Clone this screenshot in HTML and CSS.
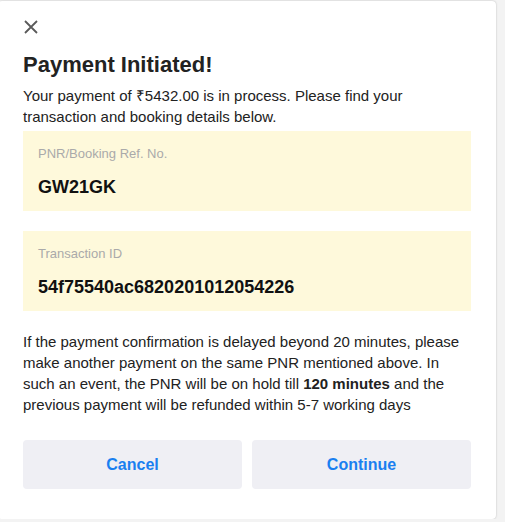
FILE: index.html
```html
<!DOCTYPE html>
<html>
<head>
<meta charset="utf-8">
<link rel="stylesheet" href="styles.css">
</head>
<body>
<div class="card">
  <button class="close" aria-label="Close">
    <svg width="16" height="16" viewBox="0 0 16 16"><path d="M2 2 L14 14 M14 2 L2 14" stroke="#5a5a5a" stroke-width="1.8" fill="none"/></svg>
  </button>
  <h1 class="title">Payment Initiated!</h1>
  <p class="intro">Your payment of ₹5432.00 is in process. Please find your transaction and booking details below.</p>
  <div class="info">
    <div class="label">PNR/Booking Ref. No.</div>
    <div class="value">GW21GK</div>
  </div>
  <div class="info">
    <div class="label">Transaction ID</div>
    <div class="value">54f75540ac6820201012054226</div>
  </div>
  <p class="note">If the payment confirmation is delayed beyond 20 minutes, please make another payment on the same PNR mentioned above. In such an event, the PNR will be on hold till <b>120 minutes</b> and the previous payment will be refunded within 5-7 working days</p>
  <div class="actions">
    <button class="btn">Cancel</button>
    <button class="btn">Continue</button>
  </div>
</div>
</body>
</html>
```
FILE: styles.css
```css
html, body {
  margin: 0;
  padding: 0;
  background: #f3f3f3;
  font-family: "Liberation Sans", Arial, sans-serif;
  color: #333;
}
.card {
  box-sizing: border-box;
  margin: 1px 0 0 -2px;
  width: 498px;
  height: 518px;
  background: #fff;
  border-radius: 4px;
  box-shadow: 0 0 2px rgba(0,0,0,0.25);
  padding: 18px 25px 0 25px;
}
.close {
  display: block;
  border: 0;
  background: none;
  padding: 0;
  width: 16px;
  height: 16px;
  cursor: pointer;
}
.close svg { display: block; }
.title {
  margin: 17px 0 0;
  font-size: 22px;
  line-height: 26px;
  font-weight: bold;
  color: #222;
}
.intro {
  margin: 7px 0 0;
  font-size: 15px;
  line-height: 21px;
  color: #222;
}
.info {
  margin-top: 4px;
  background: #fef9db;
  height: 80px;
  box-sizing: border-box;
  padding: 15px 15px 0;
}
.info + .info { margin-top: 20px; }
.label {
  font-size: 13px;
  line-height: 16px;
  color: #aaa;
}
.value {
  margin-top: 14px;
  font-size: 18px;
  line-height: 22px;
  font-weight: bold;
  color: #111;
}
.note {
  margin: 20px 0 0;
  font-size: 15px;
  line-height: 21px;
  color: #222;
}
.note b { color: #222; }
.actions {
  margin-top: 25px;
  display: grid;
  grid-template-columns: 1fr 1fr;
  gap: 10px;
}
.btn {
  height: 49px;
  border: 0;
  border-radius: 4px;
  background: #efeff4;
  color: #1a7ff0;
  font-family: "Liberation Sans", Arial, sans-serif;
  font-size: 16px;
  font-weight: bold;
  cursor: pointer;
}
```
